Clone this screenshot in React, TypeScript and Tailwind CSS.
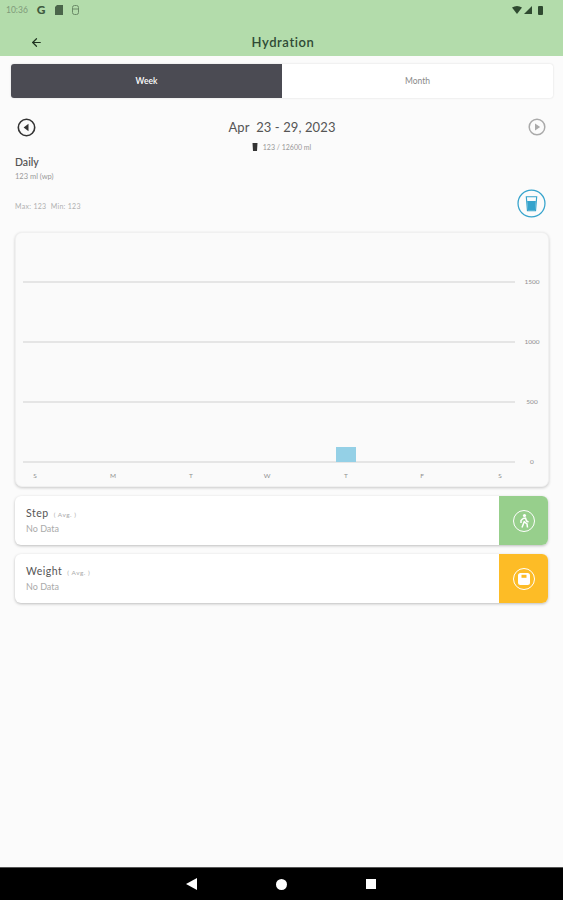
import { ArrowLeft } from 'lucide-react';

const font = { fontFamily: '"Lato", "Noto Sans", sans-serif' };

function StatCard({ title, color, icon }: { title: string; color: string; icon: React.ReactNode }) {
  return (
    <div className="flex h-[49px] bg-white rounded-md shadow-[0_1px_3px_rgba(0,0,0,0.25)] overflow-hidden">
      <div className="flex-1 pl-[11px] pt-[9px]">
        <div className="flex items-baseline leading-[16px]">
          <span className="text-[10.5px] tracking-[0.5px] text-[#555]">{title}</span>
          <span className="ml-[5px] text-[6.5px] tracking-[0.5px] text-[#aaa]">( Avg. )</span>
        </div>
        <div className="text-[9px] leading-[12px] text-[#aaa]">No Data</div>
      </div>
      <div className={`w-[49px] flex items-center justify-center ${color}`}>{icon}</div>
    </div>
  );
}

export default function App() {
  const days = ['S', 'M', 'T', 'W', 'T', 'F', 'S'];
  const dayX = [35, 113, 191, 267, 346, 422, 500];
  const lines = [
    { y: 50, label: '1500' },
    { y: 110, label: '1000' },
    { y: 170, label: '500' },
    { y: 230, label: '0' },
  ];

  return (
    <div className="w-[563px] h-[900px] flex flex-col bg-[#fbfbfb] overflow-hidden" style={font}>
      {/* Status bar + header */}
      <div className="h-[56px] bg-[#b3dcab] shrink-0">
        <div className="h-[18px] flex items-center justify-between pl-[6px] pr-[20px] pt-[2px]">
          <div className="flex items-center">
            <span className="text-[8.5px] text-[#7f9a7a]">10:36</span>
            <span className="ml-[9px] text-[12px] font-black text-[#3f5a40] leading-none">G</span>
            <svg className="ml-[9px]" width="8" height="10" viewBox="0 0 8 10">
              <path d="M2 0h6v10H0V2z" fill="#4a654a" />
            </svg>
            <svg className="ml-[9px]" width="7" height="10" viewBox="0 0 7 10" fill="none" stroke="#6b8a68">
              <rect x="0.5" y="0.5" width="6" height="9" rx="2" />
              <path d="M1 4h5" />
            </svg>
          </div>
          <div className="flex items-center gap-[2px]">
            <svg width="10" height="8" viewBox="0 0 10 8"><path d="M0 1.5Q5-1.5 10 1.5L5 8z" fill="#2f4a30" /></svg>
            <svg width="8" height="8" viewBox="0 0 8 8"><path d="M8 0v8H0z" fill="#2f4a30" /></svg>
            <svg className="ml-[4px]" width="5" height="9" viewBox="0 0 5 9"><rect width="5" height="9" rx="1" fill="#2f4a30" /></svg>
          </div>
        </div>
        <div className="h-[38px] pt-[12px] flex items-center relative">
          <ArrowLeft className="ml-[30px] mb-[2px] text-[#1f3320]" size={13} strokeWidth={2.2} />
          <span className="absolute left-[232px] top-[15px] w-[102px] text-center text-[13px] font-semibold tracking-[0.6px] text-[#2f4a35]">
            Hydration
          </span>
        </div>
      </div>

      <div className="flex-1 flex flex-col">
        {/* Week / Month toggle */}
        <div className="mt-[8px] ml-[11px] w-[542px] h-[34px] flex rounded-[3px] shadow-[0_0_2px_rgba(0,0,0,0.15)] bg-white overflow-hidden">
          <div className="w-[271px] flex items-center justify-center bg-[#4b4b53] text-white text-[8.5px] font-semibold">Week</div>
          <div className="w-[271px] flex items-center justify-center text-[#8a8a8a] text-[8.5px]">Month</div>
        </div>

        {/* Date row */}
        <div className="mt-[19px] pl-[17px] pr-[17px] h-[20px] flex items-center justify-between">
          <svg width="19" height="19" viewBox="0 0 19 19">
            <circle cx="9.5" cy="9.5" r="8.2" fill="none" stroke="#333" strokeWidth="1.6" />
            <path d="M11.5 5.8v7.4L6.6 9.5z" fill="#333" />
          </svg>
          <span className="pt-[1px] text-[13px] tracking-[0.1px] text-[#555]">Apr&nbsp; 23 - 29, 2023</span>
          <svg width="18" height="18" viewBox="0 0 18 18">
            <circle cx="9" cy="9" r="7.8" fill="none" stroke="#aaa" strokeWidth="1.5" />
            <path d="M7 5.5v7L12.2 9z" fill="#aaa" />
          </svg>
        </div>
        <div className="mt-[5px] h-[10px] flex items-center justify-center">
          <svg width="6" height="8" viewBox="0 0 6 8"><path d="M0.5 0h5l-.5 8H1z" fill="#333" /></svg>
          <span className="ml-[5px] text-[7px] text-[#999]">123 / 12600 ml</span>
        </div>

        {/* Daily summary */}
        <div className="pl-[15px] pr-[17px] flex justify-between items-end">
          <div>
            <div className="mt-[4px] text-[10.5px] font-semibold leading-[12px] text-[#555]">Daily</div>
            <div className="mt-[3px] text-[7.5px] leading-[11px] text-[#999]">123 ml (wp)</div>
            <div className="mt-[19px] mb-[7px] text-[7px] tracking-[0.3px] leading-[10px] text-[#b0b0b0]">Max: 123 &nbsp;Min: 123</div>
          </div>
          <svg width="29" height="29" viewBox="0 0 28 28">
            <circle cx="14" cy="14" r="13" fill="none" stroke="#35a3cc" strokeWidth="1.2" />
            <path d="M9 7.5h10l-1.1 13.5h-7.8z" fill="none" stroke="#35a3cc" strokeWidth="1.1" />
            <path d="M9.8 11.5h8.4l-.8 9h-6.8z" fill="#35a3cc" />
          </svg>
        </div>

        {/* Chart card */}
        <div className="mt-[14px] ml-[15px] w-[534px] h-[255px] rounded-[7px] bg-[#fafafa] border border-[#f0f0f0] shadow-[0_1px_3px_rgba(0,0,0,0.2)]">
          <svg width="532" height="253" viewBox="0 0 532 253" style={font}>
            {lines.map((l) => (
              <g key={l.label}>
                <line x1="7" x2="499" y1={l.y - 1} y2={l.y - 1} stroke="#d0d0d0" strokeWidth="1" />
                <text x="516" y={l.y + 1} textAnchor="middle" fontSize="6.5" fill="#8f8f8f">{l.label}</text>
              </g>
            ))}
            <rect x="320" y="214" width="20" height="15" fill="#94d0e6" />
            {days.map((d, i) => (
              <text key={i} x={dayX[i] - 16} y="245" textAnchor="middle" fontSize="6.5" fill="#8f8f8f">{d}</text>
            ))}
          </svg>
        </div>

        {/* Stat cards */}
        <div className="mt-[9px] ml-[15px] w-[533px] flex flex-col gap-[9px]">
          <StatCard
            title="Step"
            color="bg-[#97cf8c]"
            icon={
              <svg width="24" height="24" viewBox="0 0 24 24" fill="none">
                <circle cx="12" cy="12" r="10.5" stroke="white" strokeWidth="1" />
                <circle cx="12.5" cy="6.5" r="1.6" fill="white" />
                <path d="M11 9.5l2.5-.5 1 3 2 1M11 9.5l-2 2v2.5M12.5 12l-2.5 6.5M12.5 13l2.5 2 .5 3.5" stroke="white" strokeWidth="1.5" />
              </svg>
            }
          />
          <StatCard
            title="Weight"
            color="bg-[#fdbc26]"
            icon={
              <svg width="24" height="24" viewBox="0 0 24 24" fill="none">
                <circle cx="12" cy="12" r="10.5" stroke="white" strokeWidth="1" />
                <rect x="6" y="6" width="12" height="12" rx="2.5" fill="white" />
                <rect x="9.5" y="7.8" width="5" height="3" fill="#fdbc26" />
              </svg>
            }
          />
        </div>
      </div>

      {/* Android nav bar */}
      <div className="h-[33px] shrink-0 bg-black border-t border-[#555] flex items-center pl-[186px]">
        <svg width="11" height="12" viewBox="0 0 11 12"><path d="M11 0v12L0 6z" fill="white" /></svg>
        <div className="ml-[79px] w-[11px] h-[11px] rounded-full bg-white" />
        <div className="ml-[79px] w-[10px] h-[10px] bg-white" />
      </div>
    </div>
  );
}
